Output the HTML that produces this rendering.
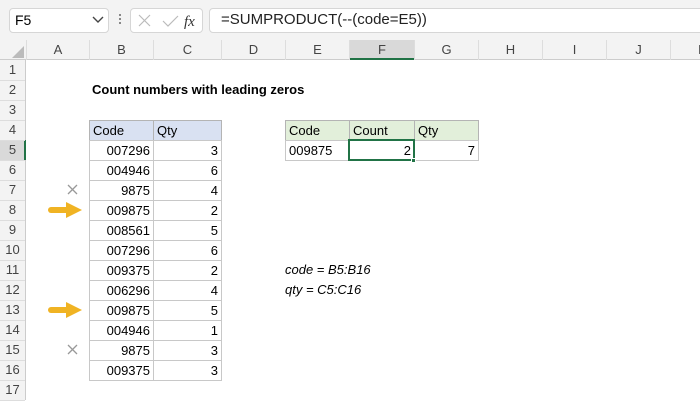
<!DOCTYPE html><html><head><style>
body{margin:0;width:700px;height:400px;overflow:hidden;background:#fff;font-family:"Liberation Sans",Calibri,sans-serif;position:relative}
.a{position:absolute;box-sizing:border-box}
.t{font-size:13px;line-height:20px;white-space:nowrap}
</style></head><body>
<div class="a" style="left:0;top:0;width:700px;height:40px;background:#f3f3f3"></div>
<div class="a" style="left:9px;top:8px;width:100px;height:25px;background:#fff;border:1px solid #d6d6d6;border-radius:4px"></div>
<div class="a t" style="left:15px;top:10px;font-size:14px">F5</div>
<svg class="a" style="left:92px;top:16px" width="12" height="8"><path d="M1 1L6 6L11 1" stroke="#444" stroke-width="1.4" fill="none"/></svg>
<div class="a" style="left:119px;top:14px;width:2px;height:2px;background:#888;box-shadow:0 4px #888,0 8px #888"></div>
<div class="a" style="left:130px;top:8px;width:73px;height:25px;background:#fff;border:1px solid #d6d6d6;border-radius:4px"></div>
<svg class="a" style="left:137px;top:13px" width="60" height="16"><path d="M2 2L13 13M13 2L2 13" stroke="#bbb" stroke-width="1.2"/><path d="M26 8L31 13L41 3" stroke="#bbb" stroke-width="1.2" fill="none"/><text x="47" y="13" font-family="Liberation Serif" font-style="italic" font-size="15" fill="#333">fx</text></svg>
<div class="a" style="left:209px;top:8px;width:500px;height:25px;background:#fff;border:1px solid #d6d6d6;border-radius:4px"></div>
<div class="a t" style="left:221px;top:10px;font-size:15px;color:#222">=SUMPRODUCT(--(code=E5))</div>
<div class="a" style="left:0;top:40px;width:700px;height:20px;background:#f3f3f3;border-bottom:1px solid #ccc"></div>
<div class="a" style="left:0;top:60px;width:26px;height:340px;background:#f3f3f3;border-right:1px solid #ccc"></div>
<svg class="a" style="left:10px;top:46px" width="14" height="12"><path d="M14 0L14 12L2 12Z" fill="#bbb"/></svg>
<div class="a" style="left:349px;top:40px;width:65px;height:20px;background:#d9d9d9;border-bottom:2px solid #217346"></div>
<div class="a" style="left:0;top:140px;width:26px;height:20px;background:#d9d9d9;border-right:2px solid #217346"></div>
<div id="g"></div>
<div class="a t" style="left:92px;top:80px;font-weight:bold;font-size:13px">Count numbers with leading zeros</div>
<div class="a t" style="left:285px;top:260px;font-style:italic">code = B5:B16</div>
<div class="a t" style="left:285px;top:280px;font-style:italic">qty = C5:C16</div>
<svg class="a" style="left:48px;top:200px" width="36" height="20"><path d="M3 10H20" stroke="#f0b323" stroke-width="6" stroke-linecap="round"/><path d="M18 2L34 10L18 18Z" fill="#f0b323"/></svg>
<svg class="a" style="left:48px;top:300px" width="36" height="20"><path d="M3 10H20" stroke="#f0b323" stroke-width="6" stroke-linecap="round"/><path d="M18 2L34 10L18 18Z" fill="#f0b323"/></svg>
<svg class="a" style="left:67px;top:184px" width="12" height="12"><path d="M1 1L10 10M10 1L1 10" stroke="#999" stroke-width="1.3"/></svg>
<svg class="a" style="left:67px;top:344px" width="12" height="12"><path d="M1 1L10 10M10 1L1 10" stroke="#999" stroke-width="1.3"/></svg>
<script>
var c=[0,26,89,153,221,285,349,414,478,542,606,670,734],L="ABCDEFGHIJK",h="";
for(var i=0;i<11;i++){h+='<div class="a t" style="left:'+c[i+1]+'px;top:40px;width:'+(c[i+2]-c[i+1])+'px;text-align:center;color:#444;border-left:1px solid #ddd">'+L[i]+'</div>';}
for(var r=1;r<=17;r++){var y=60+(r-1)*20;h+='<div class="a t" style="left:0;top:'+y+'px;width:25px;text-align:center;color:#444;border-bottom:1px solid #ddd">'+r+'</div>';}
function cell(col,row,txt,al,bg,bc){var y=60+(row-1)*20;h+='<div class="a t" style="left:'+c[col]+'px;top:'+y+'px;width:'+(c[col+1]-c[col]+1)+'px;height:21px;padding:0 3px;text-align:'+al+';background:'+bg+';border:1px solid '+bc+'">'+txt+'</div>';}
cell(2,4,"Code","left","#d9e1f2","#b4b4b4");cell(3,4,"Qty","left","#d9e1f2","#b4b4b4");
var d=[["007296",3],["004946",6],["9875",4],["009875",2],["008561",5],["007296",6],["009375",2],["006296",4],["009875",5],["004946",1],["9875",3],["009375",3]];
for(var k=0;k<12;k++){cell(2,5+k,d[k][0],"right","#fff","#c8c8c8");cell(3,5+k,d[k][1],"right","#fff","#c8c8c8");}
cell(5,4,"Code","left","#e2efda","#b4b4b4");cell(6,4,"Count","left","#e2efda","#b4b4b4");cell(7,4,"Qty","left","#e2efda","#b4b4b4");
cell(5,5,"009875","left","#fff","#c8c8c8");cell(6,5,"2","right","#fff","#c8c8c8");cell(7,5,"7","right","#fff","#c8c8c8");
h+='<div class="a" style="left:348px;top:139px;width:67px;height:22px;border:2px solid #217346"></div><div class="a" style="left:411px;top:158px;width:5px;height:5px;background:#217346;border:1px solid #fff"></div>';
document.getElementById("g").innerHTML=h;
</script>
</body></html>
